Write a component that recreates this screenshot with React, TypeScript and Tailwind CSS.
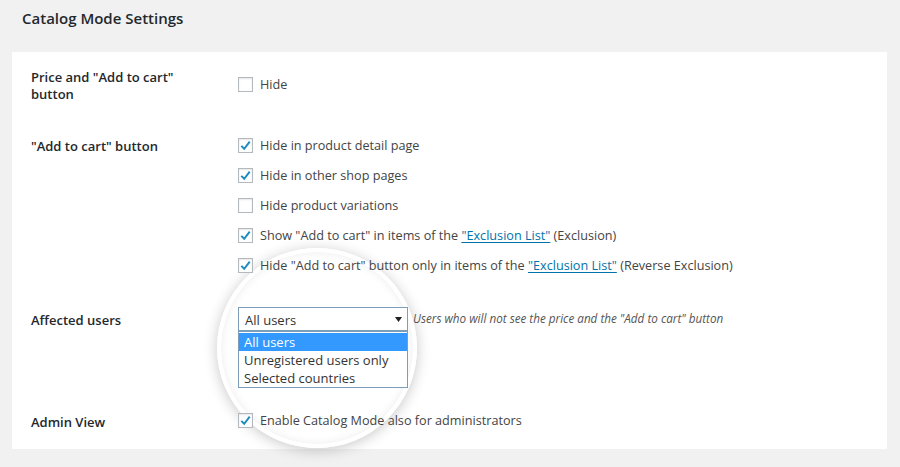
import React from "react";

const font = { fontFamily: '"Open Sans", "Liberation Sans", sans-serif' };

function Check({ checked }: { checked: boolean }) {
  return (
    <span className="w-[15px] h-[15px] border border-[#b4b9be] bg-white shadow-[inset_0_1px_2px_rgba(0,0,0,0.1)] flex items-center justify-center shrink-0">
      {checked && (
        <svg width="13" height="13" viewBox="0 0 20 20">
          <path d="M3.5 10.5 L8 15 L16.5 4" fill="none" stroke="#1e8cbe" strokeWidth="3" />
        </svg>
      )}
    </span>
  );
}

function Option({ checked, children }: { checked: boolean; children: React.ReactNode }) {
  return (
    <label className="h-[30px] flex items-center gap-[7px] text-[12.65px] text-[#444]">
      <Check checked={checked} />
      <span>{children}</span>
    </label>
  );
}

function ExclusionLink() {
  return <a className="text-[#0073aa] underline underline-offset-2">"Exclusion List"</a>;
}

export default function App() {
  return (
    <div style={font} className="w-[900px] h-[467px] bg-[#f1f1f1] overflow-hidden">
      <h2 className="pl-[22px] pt-[7px] h-[52px] text-[15px] font-semibold text-[#23282d]">
        Catalog Mode Settings
      </h2>
      <div className="relative ml-[12px] w-[875px] h-[397px] bg-white pl-[19px] pt-[11px]">
        {/* magnifier ring, drawn under the text */}
        <div className="absolute left-[205px] top-[196px] w-[200px] h-[200px] rounded-full border-[4px] border-white shadow-[0_2px_14px_rgba(0,0,0,0.22),inset_0_0_10px_rgba(0,0,0,0.08)] pointer-events-none" />

        <div className="relative z-10 grid grid-cols-[207px_1fr]">
          {/* Price row */}
          <div className="h-[68px] pt-[6px] text-[13px] leading-[17px] font-semibold text-[#23282d]">
            Price and "Add to cart"
            <br />
            button
          </div>
          <div className="h-[68px] pt-[6px]">
            <Option checked={false}>Hide</Option>
          </div>

          {/* Add to cart row */}
          <div className="h-[150px] pt-[7px] text-[13px] leading-[17px] font-semibold text-[#23282d]">
            "Add to cart" button
          </div>
          <div className="h-[150px] -mt-[1px] flex flex-col">
            <Option checked>Hide in product detail page</Option>
            <Option checked>Hide in other shop pages</Option>
            <Option checked={false}>Hide product variations</Option>
            <Option checked>
              Show "Add to cart" in items of the <ExclusionLink /> (Exclusion)
            </Option>
            <Option checked>
              Hide "Add to cart" button only in items of the <ExclusionLink /> (Reverse Exclusion)
            </Option>
          </div>

          {/* Affected users row */}
          <div className="h-[131px] pt-[31px] text-[13px] leading-[17px] font-semibold text-[#23282d]">
            Affected users
          </div>
          <div className="h-[131px] pt-[26px]">
            <div className="flex items-center gap-[5px]">
              <div className="relative w-[170px] h-[24px] border border-[#7e9db9] bg-white flex items-center pl-[6px] pt-[3px] text-[13px] text-[#333]">
                All users
                <svg className="absolute right-[5px] top-[9px]" width="7" height="5" viewBox="0 0 7 5">
                  <path d="M0 0 H7 L3.5 5 Z" fill="#222" />
                </svg>
                <div className="absolute left-[-1px] top-[23px] w-[170px] border border-[#7e9db9] bg-white text-[13px] text-[#333] leading-[18px] pt-[1px]">
                  <div className="bg-[#3399ff] text-white pl-[5px]">All users</div>
                  <div className="pl-[5px]">Unregistered users only</div>
                  <div className="pl-[5px]">Selected countries</div>
                </div>
              </div>
              <span className="text-[11.7px] italic text-[#555]">
                Users who will not see the price and the "Add to cart" button
              </span>
            </div>
          </div>

          {/* Admin row */}
          <div className="pt-[2px] text-[13px] leading-[17px] font-semibold text-[#23282d]">
            Admin View
          </div>
          <div className="-mt-[7px]">
            <Option checked>Enable Catalog Mode also for administrators</Option>
          </div>
        </div>
      </div>
    </div>
  );
}
